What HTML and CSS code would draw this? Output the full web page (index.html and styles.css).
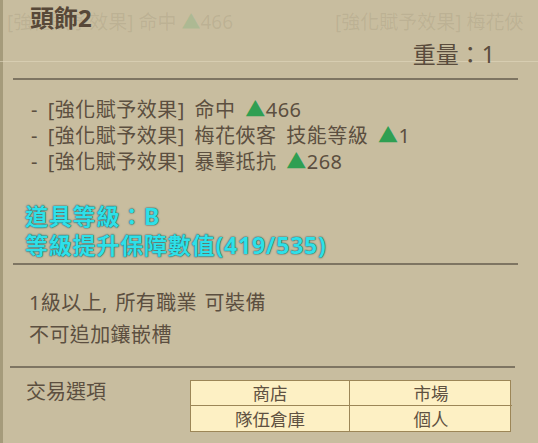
FILE: index.html
```html
<!DOCTYPE html>
<html lang="zh-Hant">
<head>
<meta charset="utf-8">
<link rel="stylesheet" href="styles.css">
</head>
<body>
<div class="tooltip">
  <div class="ghost" aria-hidden="true">
    <span class="ghost-a">[強化賦予效果] 命中 <span class="ghost-tri">▲</span>466</span>
    <span class="ghost-b">[強化賦予效果] 梅花俠</span>
    <div class="ghost-line"></div>
  </div>
  <div class="header">
    <div class="title">頭飾2</div>
    <div class="weight">重量：1</div>
  </div>
  <div class="rule"></div>
  <div class="effects">
    <div class="effect">- [強化賦予效果] 命中 <span class="tri">▲</span>466</div>
    <div class="effect">- [強化賦予效果] 梅花俠客 技能等級 <span class="tri">▲</span>1</div>
    <div class="effect">- [強化賦予效果] 暴擊抵抗 <span class="tri">▲</span>268</div>
  </div>
  <div class="grade">
    <div>道具等級：B</div>
    <div>等級提升保障數值(419/535)</div>
  </div>
  <div class="rule"></div>
  <div class="reqs">
    <div>1級以上, 所有職業 可裝備</div>
    <div>不可追加鑲嵌槽</div>
  </div>
  <div class="rule rule-b"></div>
  <div class="trade">
    <div class="trade-label">交易選項</div>
    <div class="trade-grid">
      <div class="cell">商店</div>
      <div class="cell">市場</div>
      <div class="cell">隊伍倉庫</div>
      <div class="cell">個人</div>
    </div>
  </div>
</div>
</body>
</html>
```
FILE: styles.css
```css
html, body {
  margin: 0;
  padding: 0;
}
body {
  background: #c8bd9f;
  font-family: "Noto Sans", "Noto Sans CJK TC", sans-serif;
  color: #5c4f40;
  width: 538px;
  height: 443px;
  overflow: hidden;
}
.tooltip {
  position: relative;
  height: 443px;
  box-sizing: border-box;
  border-left: 3px solid #a59b7b;
  background: #c8bd9f;
}
.ghost {
  position: absolute;
  left: -3px;
  top: 0;
  width: 541px;
  height: 70px;
  overflow: hidden;
  font-size: 19px;
  color: rgba(110, 96, 72, 0.13);
  pointer-events: none;
}
.ghost-a {
  position: absolute;
  left: 7px;
  top: 8px;
  line-height: 28px;
  white-space: nowrap;
}
.ghost-b {
  position: absolute;
  left: 335px;
  top: 8px;
  line-height: 28px;
  white-space: nowrap;
}
.ghost-tri {
  color: rgba(60, 170, 100, 0.2);
}
.ghost-line {
  position: absolute;
  left: 0;
  top: 61px;
  width: 100%;
  height: 1px;
  background: rgba(225, 215, 190, 0.6);
}
.header {
  position: relative;
  padding: 0 43px 0 27px;
}
.title {
  font-size: 24px;
  font-weight: bold;
  line-height: 35px;
  color: #574838;
}
.weight {
  margin-top: 5px;
  text-align: right;
  font-size: 23px;
  line-height: 28px;
  color: #5a4c3d;
}
.rule {
  height: 2px;
  background: #7e7562;
  margin: 10px 20px 0 10px;
}
.effects {
  padding: 17px 0 0 28px;
  font-size: 20px;
  letter-spacing: 0.5px;
  word-spacing: 4px;
  line-height: 26px;
}
.effect {
  white-space: nowrap;
}
.tri {
  color: #2f9f52;
}
.grade {
  margin-top: 27px;
  padding-left: 22px;
  font-size: 23px;
  font-weight: bold;
  letter-spacing: 0.8px;
  line-height: 29px;
  color: #2fe0e8;
  text-shadow: 0 0 1px #0e4e55, 0 0 2px rgba(10, 70, 80, 0.8);
}
.grade + .rule {
  margin-top: 3px;
}
.reqs {
  padding: 22px 0 0 26px;
  font-size: 20px;
  letter-spacing: 0.4px;
  word-spacing: 2px;
  line-height: 32px;
}
.rule-b {
  margin: 15px 23px 0 7px;
}
.trade {
  display: flex;
  padding: 12px 0 0 23px;
}
.trade-label {
  width: 164px;
  font-size: 20px;
  line-height: 24px;
}
.trade-grid {
  display: grid;
  grid-template-columns: 159px 162px;
  grid-auto-rows: 25px;
  width: 321px;
  box-sizing: border-box;
  border: 1px solid #9c8657;
  background: #fdf0c4;
}
.cell {
  display: flex;
  align-items: center;
  justify-content: center;
  font-size: 17.5px;
  line-height: 24px;
  color: #5f5141;
  border-right: 1px solid #9c8657;
  border-bottom: 1px solid #9c8657;
  box-sizing: border-box;
}
.cell:nth-child(2n) {
  border-right: none;
}
.cell:nth-child(n+3) {
  border-bottom: none;
}
```
